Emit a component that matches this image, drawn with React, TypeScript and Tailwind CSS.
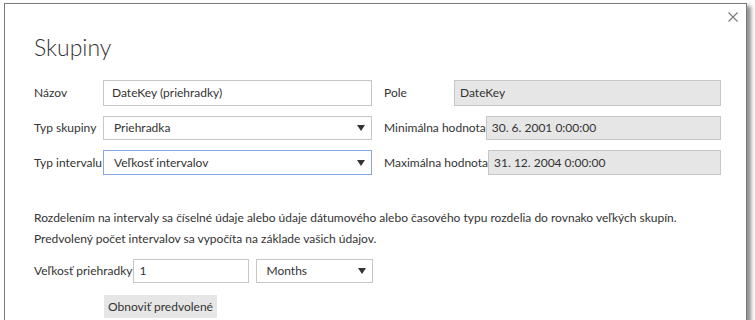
import React from "react";

const font = { fontFamily: "Lato, 'Noto Sans', sans-serif" };

const Arrow: React.FC = () => (
  <svg width="8" height="6" viewBox="0 0 8 6" className="shrink-0">
    <path d="M0 0 H8 L4 6 Z" fill="#333" />
  </svg>
);

const App: React.FC = () => {
  return (
    <div className="h-[320px] w-[755px] overflow-hidden bg-white" style={font}>
      <div className="relative ml-[4px] mt-[3px] h-[340px] w-[743px] border border-[#7a7a7a] bg-white pl-[29px] pr-[25px] text-[12px] text-[#333] shadow-[4px_3px_4px_rgba(0,0,0,0.45)]">
        <button className="absolute right-[5px] top-[5px] flex h-[16px] w-[16px] items-center justify-center">
          <svg width="10" height="10" viewBox="0 0 10 10">
            <path d="M0.5 0.5 L9.5 9.5 M9.5 0.5 L0.5 9.5" stroke="#777" strokeWidth="1.1" />
          </svg>
        </button>

        <h1 className="mt-[28px] text-[23px] font-light leading-[30px] text-[#333]">Skupiny</h1>

        <div className="mt-[18px] flex gap-[12px]">
          <div className="flex w-[338px] flex-col gap-[10px]">
            <div className="flex h-[26px] items-center">
              <span className="w-[69px] shrink-0 whitespace-nowrap">Názov</span>
              <div className="flex h-full flex-1 items-center border border-[#c6c6c6] px-[8px]">DateKey (priehradky)</div>
            </div>
            <div className="flex h-[24px] items-center">
              <span className="min-w-[69px] shrink-0 whitespace-nowrap">Typ skupiny</span>
              <div className="flex h-full flex-1 items-center justify-between border border-[#c6c6c6] pl-[10px] pr-[6px]">
                <span>Priehradka</span>
                <Arrow />
              </div>
            </div>
            <div className="flex h-[25px] items-center">
              <span className="min-w-[69px] shrink-0 whitespace-nowrap">Typ intervalu</span>
              <div className="flex h-full flex-1 items-center justify-between border border-[#86a8e6] pl-[10px] pr-[6px]">
                <span>Veľkosť intervalov</span>
                <Arrow />
              </div>
            </div>
          </div>

          <div className="flex w-[337px] flex-col gap-[10px]">
            <div className="flex h-[26px] items-center">
              <span className="w-[70px] shrink-0 whitespace-nowrap">Pole</span>
              <div className="flex h-full flex-1 items-center border border-[#c6c6c6] bg-[#e6e6e6] px-[5px]">DateKey</div>
            </div>
            <div className="flex h-[24px] items-center">
              <span className="min-w-[70px] shrink-0 whitespace-nowrap">Minimálna hodnota</span>
              <div className="flex h-full flex-1 items-center border border-[#c6c6c6] bg-[#e6e6e6] px-[5px]">30. 6. 2001 0:00:00</div>
            </div>
            <div className="flex h-[25px] items-center">
              <span className="min-w-[70px] shrink-0 whitespace-nowrap">Maximálna hodnota</span>
              <div className="flex h-full flex-1 items-center border border-[#c6c6c6] bg-[#e6e6e6] px-[5px]">31. 12. 2004 0:00:00</div>
            </div>
          </div>
        </div>

        <div className="mt-[32px] leading-[21px]">
          <p className="whitespace-nowrap">Rozdelením na intervaly sa číselné údaje alebo údaje dátumového alebo časového typu rozdelia do rovnako veľkých skupín.</p>
          <p>Predvolený počet intervalov sa vypočíta na základe vašich údajov.</p>
        </div>

        <div className="mt-[10px] flex h-[24px] items-center">
          <span className="whitespace-nowrap">Veľkosť priehradky</span>
          <div className="flex h-full w-[116px] items-center border border-[#c6c6c6] px-[6px]">1</div>
          <div className="ml-[7px] flex h-full w-[117px] items-center justify-between border border-[#c6c6c6] pl-[10px] pr-[6px]">
            <span>Months</span>
            <Arrow />
          </div>
        </div>

        <div className="ml-[70px] mt-[12px] flex h-[23px] w-[113px] items-center justify-center bg-[#e6e6e6] text-[12px]">
          Obnoviť predvolené
        </div>
      </div>
    </div>
  );
};

export default App;
